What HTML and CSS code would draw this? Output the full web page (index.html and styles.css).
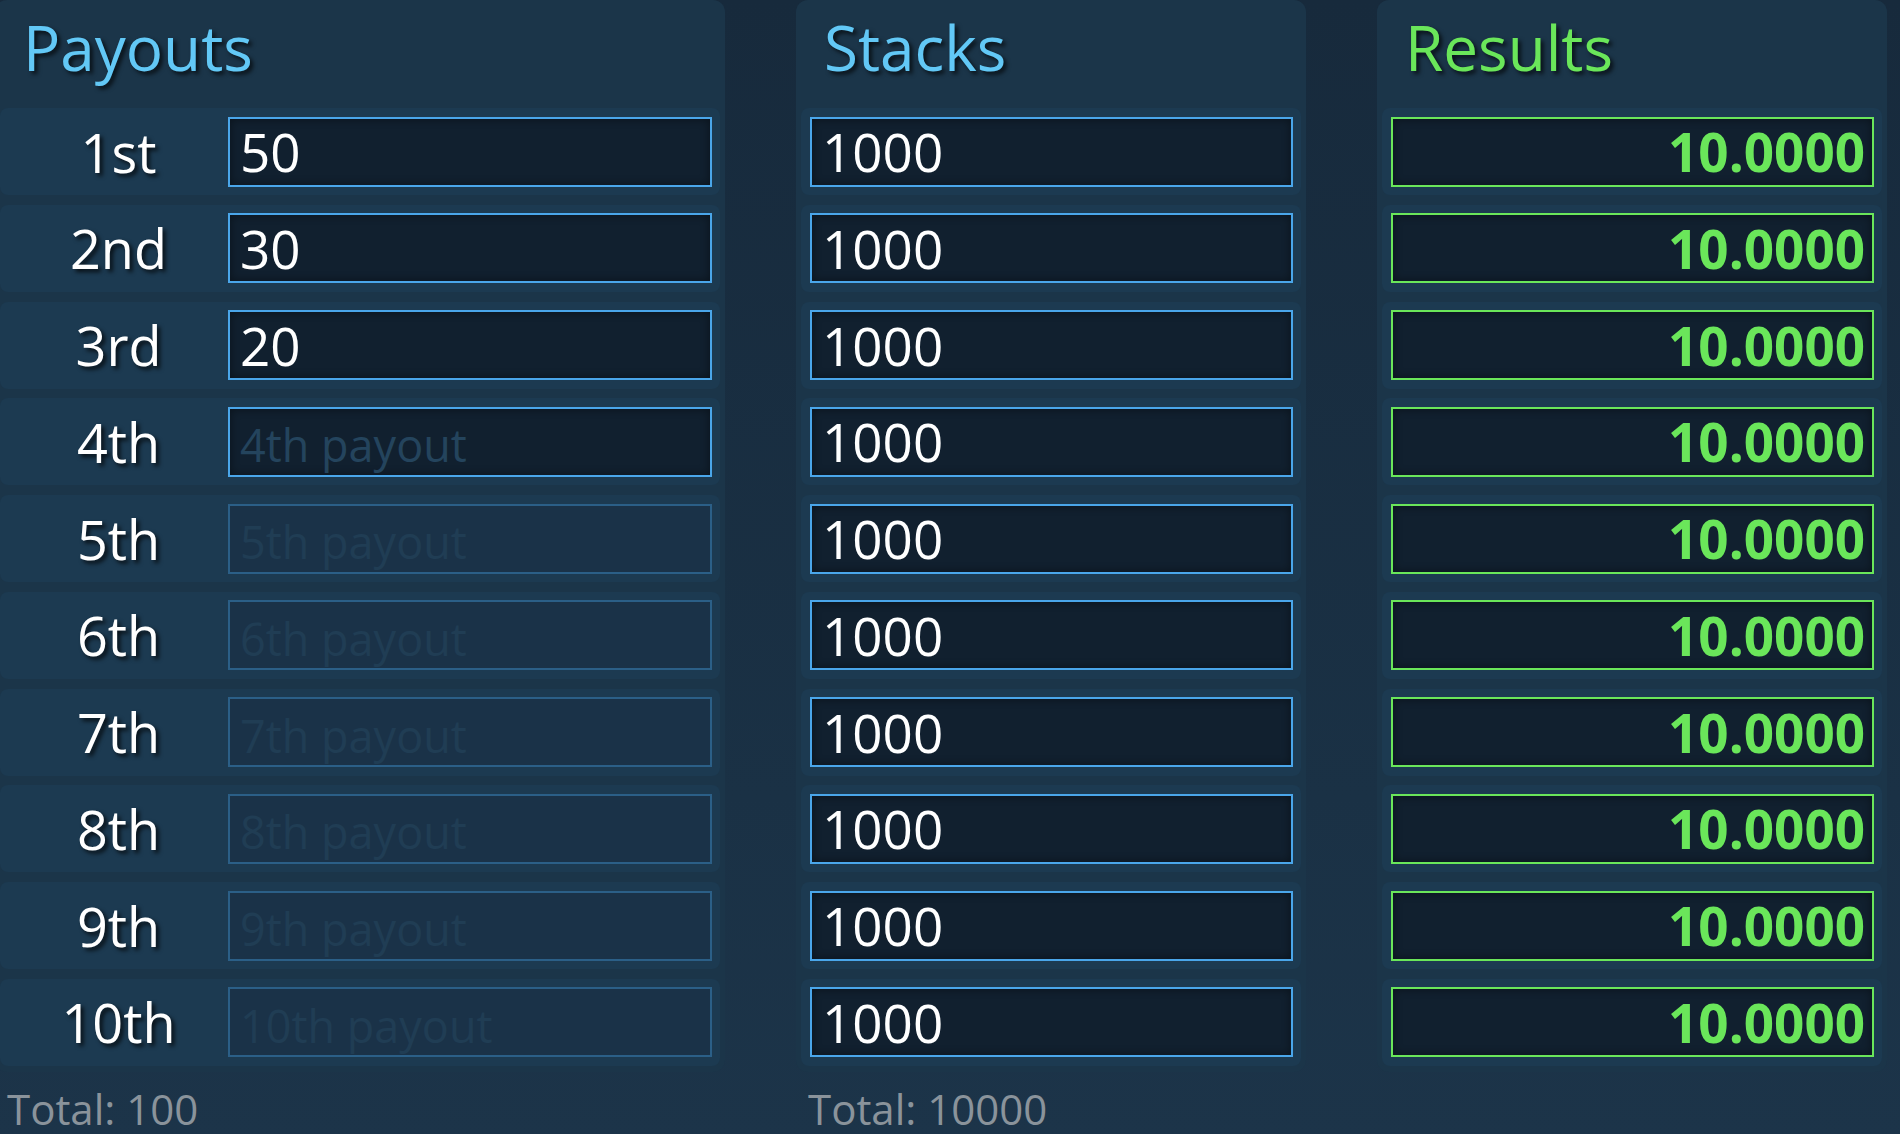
FILE: index.html
```html
<!DOCTYPE html>
<html lang="en">
<head>
  <meta charset="UTF-8">
  <meta name="viewport" content="width=device-width, initial-scale=1.0">
  <title>ICM Calculator</title>
  <link rel="stylesheet" href="styles.css">
</head>
<body>
  <main class="calc">
    <section class="column column-payouts">
      <div class="panel">
        <h2 class="panel-title">Payouts</h2>
        <div class="row"><label class="place">1st</label><input class="field" type="text" value="50"></div>
        <div class="row"><label class="place">2nd</label><input class="field" type="text" value="30"></div>
        <div class="row"><label class="place">3rd</label><input class="field" type="text" value="20"></div>
        <div class="row"><label class="place">4th</label><input class="field" type="text" placeholder="4th payout"></div>
        <div class="row"><label class="place">5th</label><input class="field" type="text" placeholder="5th payout" disabled></div>
        <div class="row"><label class="place">6th</label><input class="field" type="text" placeholder="6th payout" disabled></div>
        <div class="row"><label class="place">7th</label><input class="field" type="text" placeholder="7th payout" disabled></div>
        <div class="row"><label class="place">8th</label><input class="field" type="text" placeholder="8th payout" disabled></div>
        <div class="row"><label class="place">9th</label><input class="field" type="text" placeholder="9th payout" disabled></div>
        <div class="row"><label class="place">10th</label><input class="field" type="text" placeholder="10th payout" disabled></div>
      </div>
      <div class="total">Total: 100</div>
    </section>

    <section class="column column-stacks">
      <div class="panel">
        <h2 class="panel-title">Stacks</h2>
        <div class="row"><input class="field" type="text" value="1000"></div>
        <div class="row"><input class="field" type="text" value="1000"></div>
        <div class="row"><input class="field" type="text" value="1000"></div>
        <div class="row"><input class="field" type="text" value="1000"></div>
        <div class="row"><input class="field" type="text" value="1000"></div>
        <div class="row"><input class="field" type="text" value="1000"></div>
        <div class="row"><input class="field" type="text" value="1000"></div>
        <div class="row"><input class="field" type="text" value="1000"></div>
        <div class="row"><input class="field" type="text" value="1000"></div>
        <div class="row"><input class="field" type="text" value="1000"></div>
      </div>
      <div class="total">Total: 10000</div>
    </section>

    <section class="column column-results">
      <div class="panel">
        <h2 class="panel-title title-results">Results</h2>
        <div class="row"><input class="field field-result" type="text" value="10.0000" readonly></div>
        <div class="row"><input class="field field-result" type="text" value="10.0000" readonly></div>
        <div class="row"><input class="field field-result" type="text" value="10.0000" readonly></div>
        <div class="row"><input class="field field-result" type="text" value="10.0000" readonly></div>
        <div class="row"><input class="field field-result" type="text" value="10.0000" readonly></div>
        <div class="row"><input class="field field-result" type="text" value="10.0000" readonly></div>
        <div class="row"><input class="field field-result" type="text" value="10.0000" readonly></div>
        <div class="row"><input class="field field-result" type="text" value="10.0000" readonly></div>
        <div class="row"><input class="field field-result" type="text" value="10.0000" readonly></div>
        <div class="row"><input class="field field-result" type="text" value="10.0000" readonly></div>
      </div>
    </section>
  </main>
</body>
</html>
```

FILE: styles.css
```css
* {
  margin: 0;
  padding: 0;
  box-sizing: border-box;
}

body {
  font-family: 'Open Sans', 'Noto Sans', sans-serif;
  background: linear-gradient(180deg, #172a3c 0%, #1a3145 70%, #1c3449 100%);
  min-height: 100vh;
  color: #ffffff;
  overflow: hidden;
}

.calc {
  display: flex;
  align-items: flex-start;
  gap: 71px;
  margin-left: -5px;
}

.column-payouts {
  width: 730px;
}

.column-stacks,
.column-results {
  width: 510px;
}

.panel {
  background: #1b3549;
  border-radius: 12px;
  padding: 0 5px 6px;
}

.panel-title {
  font-size: 62px;
  font-weight: 400;
  line-height: 82px;
  color: #62c8f6;
  padding: 6px 0 20px 23px;
  text-shadow: 3px 3px 4px rgba(0, 0, 0, 0.7);
}

.title-results {
  color: #6ae65a;
}

.row {
  display: flex;
  align-items: center;
  height: 87px;
  padding: 0 8px 0 9px;
  background: #1c3a51;
  border-radius: 8px;
  margin-bottom: 9.75px;
}

.row:last-child {
  margin-bottom: 0;
}

.place {
  flex: 0 0 219px;
  text-align: center;
  font-size: 54px;
  line-height: 1;
  text-shadow: 3px 3px 4px rgba(0, 0, 0, 0.75);
}

.field {
  flex: 1;
  min-width: 0;
  height: 70px;
  border: 2px solid #4aa6ea;
  background: #11202f;
  box-shadow: inset 0 0 10px rgba(0, 0, 0, 0.45);
  color: #ffffff;
  font-family: inherit;
  font-size: 53px;
  padding: 0 10px;
  outline: none;
}

.field::placeholder {
  color: #24445d;
  font-size: 45px;
}

.field:disabled {
  background: #1a3248;
  border-color: #2b5f87;
  box-shadow: none;
}

.field:disabled::placeholder {
  color: #203d54;
}

.field-result {
  border-color: #6ae65a;
  color: #6ae65a;
  font-weight: 700;
  text-align: right;
  padding-right: 7px;
}

.total {
  margin-top: 8px;
  padding-left: 12px;
  font-size: 42px;
  color: #8a939b;
}
```
